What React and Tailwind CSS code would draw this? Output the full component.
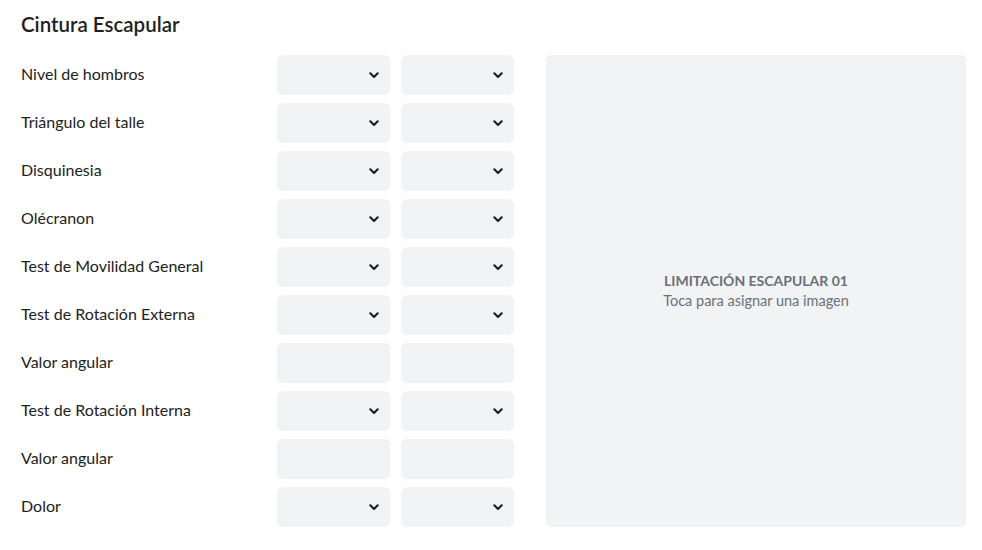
import { useState } from "react";

const rows = [
  { label: "Nivel de hombros", type: "select" },
  { label: "Triángulo del talle", type: "select" },
  { label: "Disquinesia", type: "select" },
  { label: "Olécranon", type: "select" },
  { label: "Test de Movilidad General", type: "select" },
  { label: "Test de Rotación Externa", type: "select" },
  { label: "Valor angular", type: "input" },
  { label: "Test de Rotación Interna", type: "select" },
  { label: "Valor angular", type: "input" },
  { label: "Dolor", type: "select" },
];

const Chevron = () => (
  <svg width="10" height="7" viewBox="0 0 10 7" fill="none">
    <path d="M1.3 1.3 L5 5 L8.7 1.3" stroke="#222" strokeWidth="2.2" strokeLinecap="round" strokeLinejoin="round" />
  </svg>
);

const Field = ({ type }) => {
  if (type === "input") {
    return <div className="h-10 w-[113px] rounded-md bg-[#f2f3f5] border border-[#eef0f2]" />;
  }
  return (
    <button className="h-10 w-[113px] rounded-md bg-[#f2f3f5] flex items-center justify-end pr-[11px]">
      <Chevron />
    </button>
  );
};

const App = () => {
  const [selected] = useState(null);

  return (
    <div className="bg-white min-h-[550px] pl-[21px] pt-[11px] font-['Lato',sans-serif] text-[#222]">
      <h1 className="text-[20.5px] font-semibold leading-[26px] text-[#1f1f1f]">Cintura Escapular</h1>

      <div className="flex mt-[18px]">
        <div className="flex flex-col gap-2 shrink-0">
          {rows.map((row, i) => (
            <div key={i} className="flex items-center h-10">
              <span className="w-[256px] text-[16px] -mt-[2px]">{row.label}</span>
              <div className="flex gap-[11px]">
                <Field type={row.type} />
                <Field type={row.type} />
              </div>
            </div>
          ))}
        </div>

        <div className="ml-[32px] w-[420px] shrink-0 h-[472px] rounded-md bg-[#f2f3f5] border border-[#edeff1] flex flex-col items-center justify-center cursor-pointer">
          <span className="text-[14px] font-bold text-[#6b7078] leading-5">
            {selected || "LIMITACIÓN ESCAPULAR 01"}
          </span>
          <span className="text-[14.5px] text-[#6b7078] leading-5">Toca para asignar una imagen</span>
        </div>
      </div>
    </div>
  );
};

export default App;
